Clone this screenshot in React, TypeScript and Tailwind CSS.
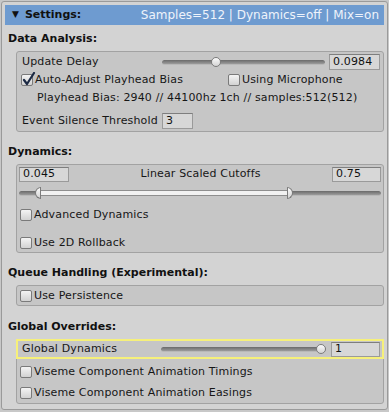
import React from 'react';

const font = { fontFamily: '"DejaVu Sans", Verdana, sans-serif' };

function Checkbox({ checked = false }: { checked?: boolean }) {
  return (
    <div className="relative w-[12px] h-[12px] shrink-0 rounded-[2px] border border-[#7a7a7a] bg-gradient-to-b from-[#f4f4f4] to-[#d2d2d2]">
      {checked && (
        <svg className="absolute left-[0px] top-[-3px]" width="14" height="14" viewBox="0 0 14 14">
          <path d="M2 8 L5 12 L12 1" fill="none" stroke="#1c2a44" strokeWidth={2.2} strokeLinecap="round" strokeLinejoin="round" />
        </svg>
      )}
    </div>
  );
}

function Field({ value, className = '' }: { value: string; className?: string }) {
  return (
    <div
      className={`shrink-0 flex items-center pl-[3px] border border-[#9a9a9a] border-t-[#7e7e7e] bg-[#d7d7d7] text-[11px] text-[#111] ${className}`}
    >
      {value}
    </div>
  );
}

function Slider({ knob, className = '' }: { knob: number; className?: string }) {
  return (
    <div className={`relative h-[12px] shrink-0 flex items-center ${className}`}>
      <div className="w-full h-[5px] rounded-full bg-gradient-to-b from-[#6a6a6a] to-[#9c9c9c] border-b border-[#b8b8b8]" />
      <div
        className="absolute top-[1px] w-[10px] h-[10px] rounded-full border border-[#7c7c7c] bg-gradient-to-b from-[#fafafa] to-[#d4d4d4]"
        style={{ left: knob - 5 }}
      />
    </div>
  );
}

function CheckRow({ label, checked, className = '' }: { label: string; checked?: boolean; className?: string }) {
  return (
    <div className={`h-[16px] flex items-center gap-[2px] ${className}`}>
      <Checkbox checked={checked} />
      <span>{label}</span>
    </div>
  );
}

function SectionLabel({ children, className = '' }: { children: React.ReactNode; className?: string }) {
  return <div className={`pl-[3px] h-[13px] leading-[13px] text-[11px] font-bold text-[#111] tracking-normal ${className}`}>{children}</div>;
}

function Box({ children, className = '' }: { children: React.ReactNode; className?: string }) {
  return (
    <div className={`ml-[11px] rounded-[3px] border border-[#a2a2a2] bg-[#c6c6c6] ${className}`}>{children}</div>
  );
}

export default function App() {
  return (
    <div className="w-[389px] h-[412px] bg-[#c8c8c8] pt-[1px] pl-[1px] text-[11px] text-[#161616] tracking-[0.15px]" style={font}>
      <div className="w-[387px] h-[409px] rounded-[3px] border border-[#9a9a9a] bg-[#d3d3d3] pt-[3px] px-[3px]">
        {/* Header */}
        <div className="h-[20px] bg-[#6e9bd0] flex items-center justify-between tracking-normal">
          <div className="flex items-center pl-[7px] font-bold text-[11px] text-[#111]">
            <span className="text-[9px] mr-[6px]">▼</span>
            <span>Settings:</span>
          </div>
          <div className="text-[12px] text-[#eef3fb] pr-[5px]">Samples=512 | Dynamics=off | Mix=on</div>
        </div>

        {/* Data Analysis */}
        <SectionLabel className="mt-[7px]">Data Analysis:</SectionLabel>
        <Box className="mt-[6px] pt-[2px] pl-[4px] pr-[2px] pb-[2px]">
          <div className="h-[16px] flex items-center">
            <div className="w-[141px] pl-[1px]">Update Delay</div>
            <Slider knob={54} className="w-[163px]" />
            <Field value="0.0984" className="ml-[4px] w-[51px] h-[16px]" />
          </div>
          <div className="mt-[2px] h-[16px] flex items-center">
            <CheckRow label="Auto-Adjust Playhead Bias" checked className="w-[207px]" />
            <CheckRow label="Using Microphone" />
          </div>
          <div className="mt-[1px] h-[18px] flex items-center pl-[16px]">
            Playhead Bias: 2940 // 44100hz 1ch // samples:512(512)
          </div>
          <div className="mt-[6px] h-[16px] flex items-center">
            <div className="w-[141px] pl-[1px]">Event Silence Threshold</div>
            <Field value="3" className="w-[31px] h-[16px]" />
          </div>
        </Box>

        {/* Dynamics */}
        <SectionLabel className="mt-[13px]">Dynamics:</SectionLabel>
        <Box className="mt-[6px] pt-[2px] px-[2px] pb-[1px]">
          <div className="h-[15px] flex items-center justify-between">
            <Field value="0.045" className="w-[50px] h-[15px]" />
            <span>Linear Scaled Cutoffs</span>
            <Field value="0.75" className="w-[49px] h-[15px]" />
          </div>
          <div className="relative mt-[5px] h-[12px] flex items-center">
            <div className="w-full h-[5px] rounded-full bg-gradient-to-b from-[#6a6a6a] to-[#9c9c9c] border-b border-[#b8b8b8]" />
            <div className="absolute left-[18px] w-[252px] h-[6px] top-[3px] bg-[#f1f1f1] border border-[#8e8e8e]" />
            <div className="absolute left-[16px] top-0 w-[6px] h-[12px] rounded-l-full border border-[#7c7c7c] bg-gradient-to-b from-[#fafafa] to-[#d4d4d4]" />
            <div className="absolute left-[268px] top-0 w-[6px] h-[12px] rounded-r-full border border-[#7c7c7c] bg-gradient-to-b from-[#fafafa] to-[#d4d4d4]" />
          </div>
          <CheckRow label="Advanced Dynamics" className="mt-[8px] ml-[1px]" />
          <CheckRow label="Use 2D Rollback" className="mt-[12px] ml-[1px]" />
        </Box>

        {/* Queue Handling */}
        <SectionLabel className="mt-[13px]">Queue Handling (Experimental):</SectionLabel>
        <Box className="mt-[6px] pt-[2px] px-[3px] pb-[1px]">
          <CheckRow label="Use Persistence" />
        </Box>

        {/* Global Overrides */}
        <SectionLabel className="mt-[14px]">Global Overrides:</SectionLabel>
        <Box className="mt-[6px] pb-[2px]">
          <div className="-mx-[1px] -mt-[1px] h-[20px] border-2 border-[#f6f07a] flex items-center">
            <div className="w-[143px] pl-[4px]">Global Dynamics</div>
            <Slider knob={160} className="w-[165px]" />
            <Field value="1" className="ml-[5px] w-[49px] h-[15px]" />
          </div>
          <CheckRow label="Viseme Component Animation Timings" className="mt-[5px] ml-[3px]" />
          <CheckRow label="Viseme Component Animation Easings" className="mt-[5px] ml-[3px]" />
        </Box>
      </div>
    </div>
  );
}
